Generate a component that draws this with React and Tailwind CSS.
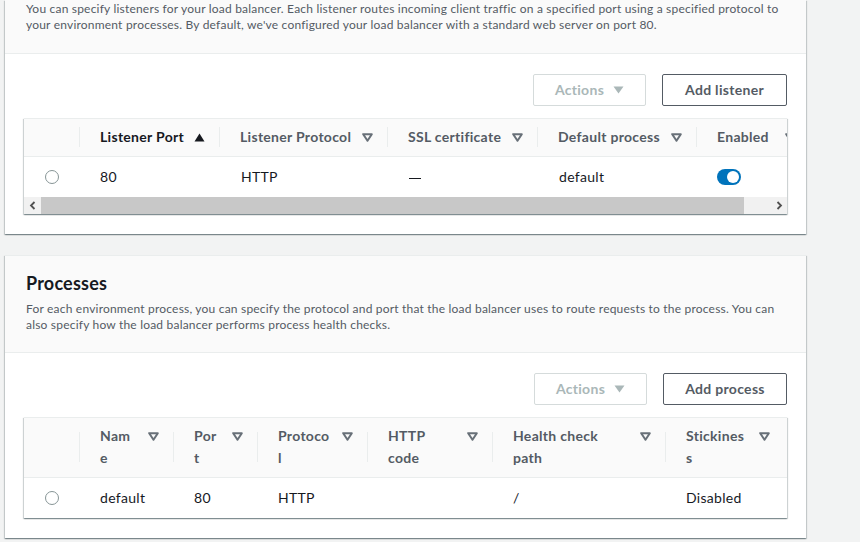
import React from 'react';

const font = { fontFamily: 'Lato, "Liberation Sans", sans-serif' };

// small triangles used in headers and buttons
function SortIcon({ kind }) {
  if (kind === 'up') {
    return (
      <svg width="11" height="9" viewBox="0 0 11 9" className="shrink-0">
        <polygon points="5.5,0.5 10.5,8.5 0.5,8.5" fill="#16191f" />
      </svg>
    );
  }
  return (
    <svg width="11" height="9" viewBox="0 0 11 9" className="shrink-0">
      <polygon points="1.2,1.2 9.8,1.2 5.5,7.8" fill="none" stroke="#687078" strokeWidth="2" strokeLinejoin="round" />
    </svg>
  );
}

function CaretDown({ color }) {
  return (
    <svg width="11" height="8" viewBox="0 0 11 8">
      <polygon points="0.5,0.5 10.5,0.5 5.5,7.5" fill={color} />
    </svg>
  );
}

function Radio() {
  return <span className="block w-[14px] h-[14px] rounded-full border border-[#879596] bg-white" />;
}

function Toggle() {
  return (
    <span className="flex items-center justify-end w-[24px] h-[16px] rounded-full bg-[#0073bb] px-[2px]">
      <span className="block w-[12px] h-[12px] rounded-full bg-white" />
    </span>
  );
}

function Buttons({ label, w }) {
  return (
    <div className="flex justify-end gap-4">
      <button className="h-[32px] w-[113px] flex items-center justify-center gap-[9px] border border-[#d5dbdb] rounded-[2px] bg-white text-[14px] tracking-[0.3px] font-bold text-[#aab7b8] pb-px">
        Actions
        <CaretDown color="#aab7b8" />
      </button>
      <button className={`h-[32px] ${w} flex items-center justify-center border border-[#545b64] rounded-[2px] bg-white text-[14px] tracking-[0.3px] font-bold text-[#545b64] pb-px`}>
        {label}
      </button>
    </div>
  );
}

function HeadCell({ w, children, sort = 'none', dark, h, pr = 'pr-[14px]' }) {
  return (
    <div className={`flex items-center shrink-0 ${w}`}>
      <span className={`w-px bg-[#eaeded] shrink-0 ${h}`} />
      <div className={`flex-1 flex items-start justify-between pl-[20px] ${pr} text-[14px] tracking-[0.3px] font-bold leading-[22px] ${dark ? 'text-[#16191f]' : 'text-[#545b64]'}`}>
        <span>{children}</span>
        <span className="h-[22px] flex items-center">
          <SortIcon kind={sort} />
        </span>
      </div>
    </div>
  );
}

function Cell({ w, children }) {
  return <div className={`shrink-0 pl-[21px] text-[14px] tracking-[0.3px] text-[#16191f] ${w}`}>{children}</div>;
}

function Chevron({ dir }) {
  return (
    <svg width="8" height="9" viewBox="0 0 8 9">
      <polyline
        points={dir === 'left' ? '5.5,1 2,4.5 5.5,8' : '2.5,1 6,4.5 2.5,8'}
        fill="none"
        stroke="#505050"
        strokeWidth="1.8"
      />
    </svg>
  );
}

const tableShadow = 'shadow-[0_1px_1px_0_rgba(0,28,36,0.3),1px_1px_1px_0_rgba(0,28,36,0.15),-1px_1px_1px_0_rgba(0,28,36,0.15)]';

function ListenersTable() {
  return (
    <div className={`bg-white border-t border-[#eaeded] overflow-hidden ${tableShadow}`}>
      <div className="w-[900px]">
        <div className="h-[38px] flex items-center bg-[#fafafa] border-b border-[#eaeded] pb-px">
          <div className="w-[55px] shrink-0" />
          <HeadCell w="w-[140px]" h="h-[20px]" sort="up" dark>Listener Port</HeadCell>
          <HeadCell w="w-[168px]" h="h-[20px]">Listener Protocol</HeadCell>
          <HeadCell w="w-[150px]" h="h-[20px]">SSL certificate</HeadCell>
          <HeadCell w="w-[159px]" h="h-[20px]">Default process</HeadCell>
          <HeadCell w="w-[110px]" h="h-[20px]" pr="pr-[10px]">Enabled</HeadCell>
        </div>
        <div className="h-[40px] flex items-center pb-px">
          <div className="w-[55px] shrink-0 pl-[21px]"><Radio /></div>
          <Cell w="w-[141px]">80</Cell>
          <Cell w="w-[168px]">HTTP</Cell>
          <Cell w="w-[150px]"><span className="inline-block w-[12px] h-px bg-[#16191f] align-middle" /></Cell>
          <Cell w="w-[159px]">default</Cell>
          <Cell w="w-[110px]"><span className="block -ml-px"><Toggle /></span></Cell>
        </div>
      </div>
      <div className="h-[17px] flex">
        <div className="w-[17px] flex items-center justify-center bg-[#f1f1f1]"><Chevron dir="left" /></div>
        <div className="w-[703px] bg-[#c8c8c8]" />
        <div className="flex-1 bg-[#f1f1f1]" />
        <div className="w-[17px] flex items-center justify-center bg-[#f1f1f1]"><Chevron dir="right" /></div>
      </div>
    </div>
  );
}

function ProcessesTable() {
  return (
    <div className={`bg-white border-t border-[#eaeded] overflow-hidden ${tableShadow}`}>
      <div className="h-[60px] flex items-center bg-[#fafafa] border-b border-[#eaeded] pb-px">
        <div className="w-[55px] shrink-0" />
        <HeadCell w="w-[94px]" h="h-[30px]">Nam<br />e</HeadCell>
        <HeadCell w="w-[84px]" h="h-[30px]">Por<br />t</HeadCell>
        <HeadCell w="w-[110px]" h="h-[30px]">Protoco<br />l</HeadCell>
        <HeadCell w="w-[125px]" h="h-[30px]">HTTP<br />code</HeadCell>
        <HeadCell w="w-[173px]" h="h-[30px]">Health check<br />path</HeadCell>
        <HeadCell w="w-[120px]" h="h-[30px]" pr="pr-[15px]">Stickines<br />s</HeadCell>
      </div>
      <div className="h-[40px] flex items-center pb-px">
        <div className="w-[55px] shrink-0 pl-[21px]"><Radio /></div>
        <Cell w="w-[94px]">default</Cell>
        <Cell w="w-[84px]">80</Cell>
        <Cell w="w-[110px]">HTTP</Cell>
        <Cell w="w-[125px]"></Cell>
        <Cell w="w-[173px]">/</Cell>
        <Cell w="w-[120px]">Disabled</Cell>
      </div>
    </div>
  );
}

const cardShadow = 'shadow-[0_1px_1px_0_rgba(0,28,36,0.3),1px_1px_1px_0_rgba(0,28,36,0.15),-1px_1px_1px_0_rgba(0,28,36,0.15)]';

export default function App() {
  return (
    <div className="w-[860px] h-[542px] overflow-hidden bg-[#f2f3f3]" style={font}>
      <div className="w-[801px] ml-[5px] flex flex-col gap-[21px]">
        {/* Listeners */}
        <div className={`bg-white ${cardShadow}`}>
          <div className="bg-[#fafafa] border-b border-[#eaeded] pt-px pb-[20px] px-[21px] text-[12px] leading-[16px] tracking-[0.2px] text-[#545b64]">
            You can specify listeners for your load balancer. Each listener routes incoming client traffic on a specified port using a specified protocol to<br />
            your environment processes. By default, we've configured your load balancer with a standard web server on port 80.
          </div>
          <div className="pt-5 pb-5 px-[19px]">
            <Buttons label="Add listener" w="w-[125px]" />
            <div className="mt-3">
              <ListenersTable />
            </div>
          </div>
        </div>

        {/* Processes */}
        <div className={`bg-white border-t border-[#eaeded] ${cardShadow}`}>
          <div className="bg-[#fafafa] border-b border-[#eaeded] pt-[16px] pb-[19px] px-[21px]">
            <h2 className="text-[18px] leading-[22px] tracking-[0.2px] font-bold text-[#16191f]">Processes</h2>
            <p className="mt-[7px] text-[12px] leading-[16px] tracking-[0.2px] text-[#545b64]">
              For each environment process, you can specify the protocol and port that the load balancer uses to route requests to the process. You can<br />
              also specify how the load balancer performs process health checks.
            </p>
          </div>
          <div className="pt-5 pb-5 px-[19px]">
            <Buttons label="Add process" w="w-[124px]" />
            <div className="mt-3">
              <ProcessesTable />
            </div>
          </div>
        </div>
      </div>
    </div>
  );
}
